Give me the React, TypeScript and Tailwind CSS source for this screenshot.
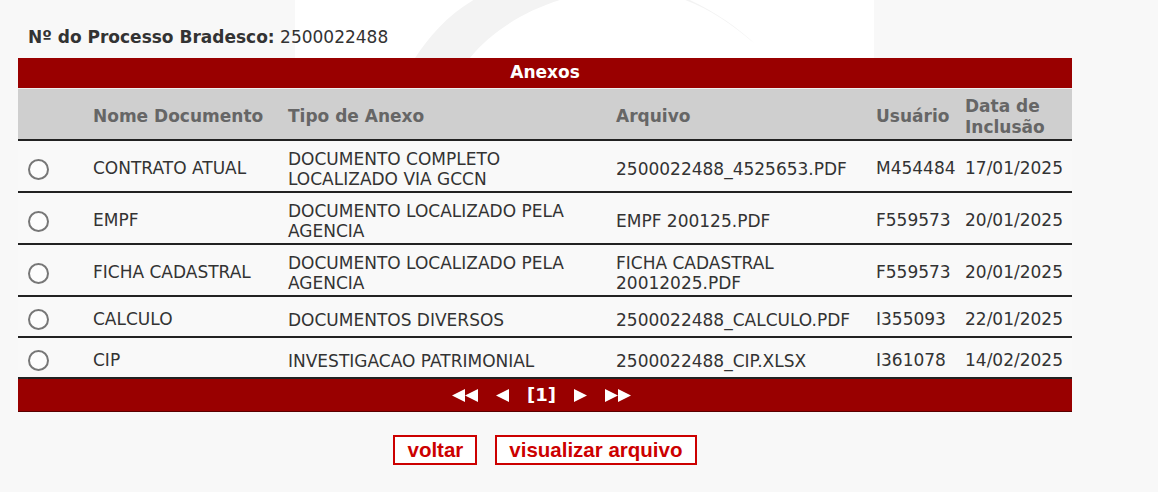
import React from "react";

type Anexo = {
  nome: string;
  tipo: string[];
  arquivo: string[];
  usuario: string;
  data: string;
};

const anexos: Anexo[] = [
  {
    nome: "CONTRATO ATUAL",
    tipo: ["DOCUMENTO COMPLETO", "LOCALIZADO VIA GCCN"],
    arquivo: ["2500022488_4525653.PDF"],
    usuario: "M454484",
    data: "17/01/2025",
  },
  {
    nome: "EMPF",
    tipo: ["DOCUMENTO LOCALIZADO PELA", "AGENCIA"],
    arquivo: ["EMPF 200125.PDF"],
    usuario: "F559573",
    data: "20/01/2025",
  },
  {
    nome: "FICHA CADASTRAL",
    tipo: ["DOCUMENTO LOCALIZADO PELA", "AGENCIA"],
    arquivo: ["FICHA CADASTRAL", "20012025.PDF"],
    usuario: "F559573",
    data: "20/01/2025",
  },
  {
    nome: "CALCULO",
    tipo: ["DOCUMENTOS DIVERSOS"],
    arquivo: ["2500022488_CALCULO.PDF"],
    usuario: "I355093",
    data: "22/01/2025",
  },
  {
    nome: "CIP",
    tipo: ["INVESTIGACAO PATRIMONIAL"],
    arquivo: ["2500022488_CIP.XLSX"],
    usuario: "I361078",
    data: "14/02/2025",
  },
];

const cols = "grid grid-cols-[75px_195px_328px_260px_89px_107px]";

function Lines({ items }: { items: string[] }) {
  return (
    <div className="flex flex-col leading-[20px]">
      {items.map((t) => (
        <span key={t}>{t}</span>
      ))}
    </div>
  );
}

function Tri({ dir }: { dir: "l" | "r" }) {
  return (
    <svg width="13" height="13" viewBox="0 0 13 13" className="block">
      {dir === "l" ? (
        <polygon points="0,6.5 13,0 13,13" fill="#ffffff" />
      ) : (
        <polygon points="0,0 13,6.5 0,13" fill="#ffffff" />
      )}
    </svg>
  );
}

export default function App() {
  return (
    <div className="relative min-h-[492px] w-full bg-[#f8f8f8] font-['DejaVu_Sans',sans-serif] text-[17px] text-[#333333]">
      {/* marca d'agua ao fundo */}
      <svg
        className="absolute left-0 top-0"
        width="1158"
        height="58"
        viewBox="0 0 1158 58"
      >
        <rect x="295" y="0" width="579" height="58" fill="#ffffff" />
        <path
          d="M 415 58 C 440 20, 480 -20, 560 -25 C 650 -30, 720 10, 755 44 C 715 10, 680 -10, 625 -10 C 560 -10, 500 20, 470 58 Z"
          fill="#f3f3f3"
        />
      </svg>

      <div className="relative ml-[18px] w-[1054px] pt-[26px]">
        <div className="pl-[10px] leading-[22px]">
          <span className="font-bold">Nº do Processo Bradesco:</span>{" "}
          2500022488
        </div>

        <div className="mt-[10px]">
          <div className="flex h-[31px] items-center justify-center border-b border-[#eeeeee] bg-[#990000] font-bold text-white">
            Anexos
          </div>

          <div
            className={`${cols} h-[52px] items-center border-b-2 border-[#222222] bg-[#cfcfcf] pt-[6px] font-bold text-[#666666]`}
          >
            <div />
            <div>Nome Documento</div>
            <div>Tipo de Anexo</div>
            <div>Arquivo</div>
            <div>Usuário</div>
            <div className="leading-[21px]">
              Data de
              <br />
              Inclusão
            </div>
          </div>

          {anexos.map((a) => {
            const tall = a.tipo.length > 1 || a.arquivo.length > 1;
            return (
              <div
                key={a.nome}
                className={`${cols} ${tall ? "h-[52px]" : "h-[41px]"} items-center border-b-2 border-[#222222] bg-[#f9f9f9] pt-[6px]`}
              >
                <div className="pl-[10px]">
                  <span className="block h-[21px] w-[21px] rounded-full border-2 border-[#777777] bg-[#fdfdfd]" />
                </div>
                <div>{a.nome}</div>
                <Lines items={a.tipo} />
                <Lines items={a.arquivo} />
                <div>{a.usuario}</div>
                <div>{a.data}</div>
              </div>
            );
          })}

          <div className="flex h-[33px] items-center justify-center gap-[18px] border-b border-[#5a0000] bg-[#990000] pr-[7px] font-bold text-white">
            <div className="flex">
              <Tri dir="l" />
              <Tri dir="l" />
            </div>
            <Tri dir="l" />
            <span className="text-[18px] leading-none">[1]</span>
            <Tri dir="r" />
            <div className="flex">
              <Tri dir="r" />
              <Tri dir="r" />
            </div>
          </div>
        </div>

        <div className="mt-[23px] flex justify-center gap-[18px] font-['Liberation_Sans',Arial,sans-serif] text-[20.5px] font-bold text-[#cc0000]">
          <button className="h-[30px] border-2 border-[#cc0000] bg-white px-[12px] leading-[24px]">
            voltar
          </button>
          <button className="h-[30px] border-2 border-[#cc0000] bg-white px-[12px] leading-[24px]">
            visualizar arquivo
          </button>
        </div>
      </div>
    </div>
  );
}
